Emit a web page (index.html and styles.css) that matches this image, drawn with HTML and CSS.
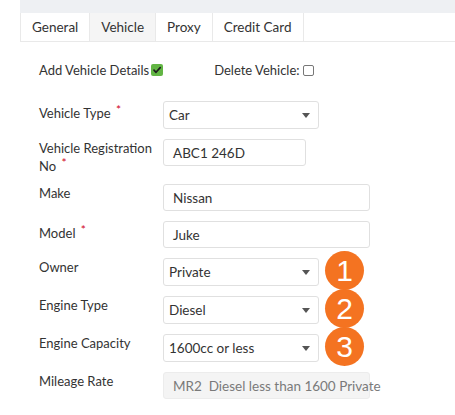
FILE: index.html
```html
<!DOCTYPE html>
<html lang="en">
<head>
  <meta charset="UTF-8" />
  <meta name="viewport" content="width=device-width, initial-scale=1" />
  <title>Vehicle</title>
  <link rel="stylesheet" href="styles.css">
</head>
<body>

  <div class="topbar"></div>

  <ul class="tabs">
    <li>General</li>
    <li class="active">Vehicle</li>
    <li>Proxy</li>
    <li>Credit Card</li>
  </ul>

  <div class="panel">
    <div class="toggles">
      <label class="toggle">Add Vehicle Details
        <span class="check checked">
          <svg width="12" height="12" viewBox="0 0 12 12"><path d="M3 6.2 L5 8.3 L9.2 3.6" fill="none" stroke="#1d1d1d" stroke-width="1.7" stroke-linecap="round" stroke-linejoin="round"/></svg>
        </span>
      </label>
      <label class="toggle toggle-delete">Delete Vehicle:<span class="check"></span></label>
    </div>

    <div class="form">
      <div class="row">
        <div class="label label-mid">Vehicle Type <span class="req">*</span></div>
        <div class="select"><span>Car</span><svg class="caret" width="8" height="5" viewBox="0 0 8 5"><path d="M0 0 H8 L4 5 Z" fill="#555"/></svg></div>
      </div>

      <div class="row row-tall">
        <div class="label">Vehicle Registration No <span class="req">*</span></div>
        <div class="input w-reg">ABC1 246D</div>
      </div>

      <div class="row">
        <div class="label">Make</div>
        <div class="input w-wide">Nissan</div>
      </div>

      <div class="row">
        <div class="label label-mid">Model <span class="req">*</span></div>
        <div class="input w-wide">Juke</div>
      </div>

      <div class="row">
        <div class="label">Owner</div>
        <div class="select"><span>Private</span><svg class="caret" width="8" height="5" viewBox="0 0 8 5"><path d="M0 0 H8 L4 5 Z" fill="#555"/></svg></div>
        <div class="badge">1</div>
      </div>

      <div class="row">
        <div class="label">Engine Type</div>
        <div class="select"><span>Diesel</span><svg class="caret" width="8" height="5" viewBox="0 0 8 5"><path d="M0 0 H8 L4 5 Z" fill="#555"/></svg></div>
        <div class="badge">2</div>
      </div>

      <div class="row">
        <div class="label">Engine Capacity</div>
        <div class="select"><span>1600cc or less</span><svg class="caret" width="8" height="5" viewBox="0 0 8 5"><path d="M0 0 H8 L4 5 Z" fill="#555"/></svg></div>
        <div class="badge">3</div>
      </div>

      <div class="row">
        <div class="label">Mileage Rate</div>
        <div class="input w-wide readonly">MR2&nbsp; Diesel less than 1600 Private</div>
      </div>
    </div>
  </div>

</body>
</html>
```

FILE: styles.css
```css
body {
  margin: 0;
  font-family: Lato, "Open Sans", sans-serif;
  font-size: 13px;
  color: #333;
  background: #fff;
}

.topbar {
  margin-left: 20px;
  height: 13px;
  background: #eef0f3;
}

/* tab strip */
.tabs {
  display: flex;
  list-style: none;
  margin: 0 0 0 20px;
  padding: 0;
  border-bottom: 1px solid #e9e9e9;
}
.tabs li {
  height: 28px;
  line-height: 29px;
  padding: 0 11px;
  border-left: 1px solid #e9e9e9;
  font-size: 13.5px;
}
.tabs li:last-child {
  border-right: 1px solid #e9e9e9;
}
.tabs li.active {
  background: #f5f5f5;
}

.panel {
  padding-left: 39px;
}

/* checkboxes above the form */
.toggles {
  display: flex;
  align-items: center;
  margin-top: 19px;
  height: 18px;
}
.toggle {
  display: flex;
  align-items: center;
}
.toggle-delete {
  margin-left: 51px;
}
.check {
  display: inline-block;
  box-sizing: border-box;
  width: 11px;
  height: 11px;
  margin-left: 3px;
  border: 1px solid #777;
  border-radius: 2px;
  background: #fff;
}
.check.checked {
  width: 12px;
  height: 12px;
  margin-left: 2px;
  border: none;
  background: #62b544;
}
.check svg {
  display: block;
}

/* form rows */
.form {
  margin-top: 22px;
}
.row {
  position: relative;
  display: flex;
  align-items: flex-start;
  margin-bottom: 10px;
}
.row-tall {
  margin-bottom: 8px;
}
.label {
  width: 118px;
  margin-right: 6px;
  line-height: 18px;
}
.label-mid {
  padding-top: 3px;
}
.req {
  position: relative;
  top: -4px;
  color: #d0021b;
  font-size: 12px;
  margin-left: 2px;
}

.select,
.input {
  box-sizing: border-box;
  display: flex;
  align-items: center;
  border: 1px solid #e0e0e0;
  border-radius: 3px;
  background: #fff;
  font-size: 13.5px;
  white-space: nowrap;
}
.select {
  width: 156px;
  height: 28px;
  justify-content: space-between;
  padding: 0 8px 0 5px;
}
.input {
  height: 27px;
  padding: 0 9px;
}
.w-reg {
  width: 143px;
}
.w-wide {
  width: 207px;
}
.readonly {
  background: #f4f4f4;
  border-color: #ececec;
  color: #7a7a7a;
}

/* numbered callouts */
.badge {
  position: absolute;
  left: 286px;
  top: -7px;
  width: 39px;
  height: 39px;
  border-radius: 50%;
  background: #f47321;
  color: #fff;
  font-family: "Liberation Sans", Arial, sans-serif;
  font-size: 30px;
  line-height: 39px;
  text-align: center;
}
```
